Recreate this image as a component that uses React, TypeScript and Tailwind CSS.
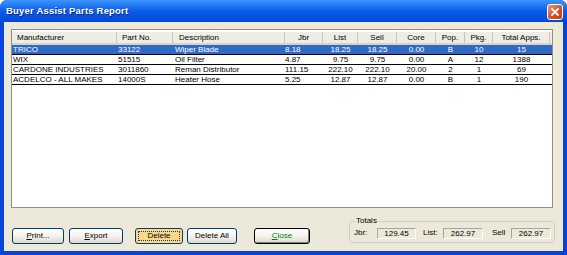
import { twMerge } from "tailwind-merge";
import clsx from "clsx";

type Part = {
  mfr: string;
  partNo: string;
  desc: string;
  jbr: string;
  list: string;
  sell: string;
  core: string;
  pop: string;
  pkg: string;
  apps: string;
};

const parts: Part[] = [
  { mfr: "TRICO", partNo: "33122", desc: "Wiper Blade", jbr: "8.18", list: "18.25", sell: "18.25", core: "0.00", pop: "B", pkg: "10", apps: "15" },
  { mfr: "WIX", partNo: "51515", desc: "Oil Filter", jbr: "4.87", list: "9.75", sell: "9.75", core: "0.00", pop: "A", pkg: "12", apps: "1388" },
  { mfr: "CARDONE INDUSTRIES", partNo: "3011860", desc: "Reman Distributor", jbr: "111.15", list: "222.10", sell: "222.10", core: "20.00", pop: "2", pkg: "1", apps: "69" },
  { mfr: "ACDELCO - ALL MAKES", partNo: "14000S", desc: "Heater Hose", jbr: "5.25", list: "12.87", sell: "12.87", core: "0.00", pop: "B", pkg: "1", apps: "190" },
];

const columns = [
  { label: "Manufacturer", w: "w-[105px]", head: "text-left pl-[5px]" },
  { label: "Part No.", w: "w-[56px]", head: "text-left pl-[5px]" },
  { label: "Description", w: "w-[112px]", head: "text-left pl-[6px]" },
  { label: "Jbr", w: "w-[38px]", head: "text-center" },
  { label: "List", w: "w-[35px]", head: "text-center" },
  { label: "Sell", w: "w-[39px]", head: "text-center" },
  { label: "Core", w: "w-[39px]", head: "text-center" },
  { label: "Pop.", w: "w-[29px]", head: "text-center" },
  { label: "Pkg.", w: "w-[28px]", head: "text-center" },
  { label: "Total Apps.", w: "w-[57px]", head: "text-center" },
];

function XPButton({
  children,
  className,
}: {
  children: React.ReactNode;
  className?: string;
}) {
  return (
    <button
      className={twMerge(
        "h-[16px] shrink-0 rounded-[3px] border border-[#003C74] bg-linear-to-b from-white via-[#f4f3ee] to-[#dcd8c8] text-[8px] leading-none text-black",
        className
      )}
    >
      {children}
    </button>
  );
}

function Row({ p, selected }: { p: Part; selected?: boolean }) {
  return (
    <div
      className={clsx(
        "flex h-[10px] border-b border-black leading-[9px] whitespace-nowrap",
        selected ? "bg-[#316AC5] text-white" : "text-black"
      )}
    >
      <div className="w-[105px] pl-[1px]">{p.mfr}</div>
      <div className="w-[56px] pl-[1px]">{p.partNo}</div>
      <div className="w-[112px] pl-[2px]">{p.desc}</div>
      <div className="w-[38px] pr-[24px] text-right">{p.jbr}</div>
      <div className="w-[35px] text-center">{p.list}</div>
      <div className="w-[39px] text-center">{p.sell}</div>
      <div className="w-[39px] text-center">{p.core}</div>
      <div className="w-[29px] text-center">{p.pop}</div>
      <div className="w-[28px] text-center">{p.pkg}</div>
      <div className="w-[57px] text-center">{p.apps}</div>
    </div>
  );
}

function TotalBox({ value, w }: { value: string; w: string }) {
  return (
    <div
      className={clsx(
        "h-[11px] border border-t-[#a7a69a] border-l-[#a7a69a] border-r-white border-b-white text-center leading-[9px]",
        w
      )}
    >
      {value}
    </div>
  );
}

export default function App() {
  return (
    <div className="flex h-[255px] w-[567px] flex-col overflow-hidden rounded-t-[7px] bg-[#0842d8] font-['Liberation_Sans',Arial,sans-serif] text-[8px]">
      {/* title bar */}
      <div className="flex h-[22px] shrink-0 items-center justify-between bg-linear-to-b from-[#3d95ff] via-[#0a5de8] to-[#0148d4] pl-[6px] pr-[4px]">
        <span className="text-[9.5px] font-bold tracking-[0.2px] text-white [text-shadow:1px_1px_0_#0b2a80]">
          Buyer Assist Parts Report
        </span>
        <div className="mt-[1px] flex h-[16px] w-[16px] items-center justify-center rounded-[3px] border border-white bg-linear-to-br from-[#f09a7d] via-[#d9532b] to-[#c23b12]">
          <svg width="8" height="8" viewBox="0 0 8 8">
            <path d="M1 1 L7 7 M7 1 L1 7" stroke="white" strokeWidth="1.8" strokeLinecap="square" />
          </svg>
        </div>
      </div>

      {/* body */}
      <div className="mx-[4px] mb-[4px] flex flex-1 flex-col bg-[#ECE9D8]">
        {/* list view */}
        <div className="ml-[7px] mt-[7px] h-[179px] w-[542px] border border-[#8e8f8f] bg-white pt-[2px]">
          <div className="flex h-[13px] border-b-2 border-[#d8d4c4] bg-[#eeede5] leading-[11px] text-black">
            {columns.map((c) => (
              <div key={c.label} className={clsx(c.w, c.head, "border-r border-[#c8c5b4]")}>
                {c.label}
              </div>
            ))}
          </div>
          {parts.map((p, i) => (
            <Row key={p.partNo} p={p} selected={i === 0} />
          ))}
        </div>

        {/* bottom controls */}
        <div className="mt-[10px] flex items-start pl-[8px] pr-[8px]">
          <XPButton className="mt-[10px] w-[52px]">
            <span className="underline">P</span>rint...
          </XPButton>
          <XPButton className="ml-[5px] mt-[10px] w-[54px]">
            <span className="underline">E</span>xport
          </XPButton>
          <button className="ml-[12px] mt-[10px] h-[16px] w-[48px] shrink-0 rounded-[3px] border border-[#003C74] bg-[#f8d88c] p-[2px] text-[8px] leading-none text-black">
            <span className="flex h-full w-full items-center justify-center border border-dotted border-[#3a3a3a]">
              Delete
            </span>
          </button>
          <XPButton className="ml-[4px] mt-[10px] w-[50px]">Delete All</XPButton>
          <XPButton className="ml-[17px] mt-[10px] w-[56px] border-black text-[#008000] shadow-[inset_-1px_-1px_0_#7f7f7f]">
            <span className="underline">C</span>lose
          </XPButton>

          {/* totals group */}
          <div className="relative ml-auto mt-[3px] flex h-[22px] w-[206px] items-center rounded-[3px] border border-[#d0d0bf] pl-[4px] pt-[2px]">
            <span className="absolute -top-[6px] left-[5px] bg-[#ECE9D8] px-[1px] leading-[10px]">
              Totals
            </span>
            <span className="w-[23px]">Jbr:</span>
            <TotalBox value="129.45" w="w-[39px]" />
            <span className="ml-[7px] w-[20px]">List:</span>
            <TotalBox value="262.97" w="w-[40px]" />
            <span className="ml-[9px] w-[19px]">Sell</span>
            <TotalBox value="262.97" w="w-[40px]" />
          </div>
        </div>
      </div>
    </div>
  );
}
